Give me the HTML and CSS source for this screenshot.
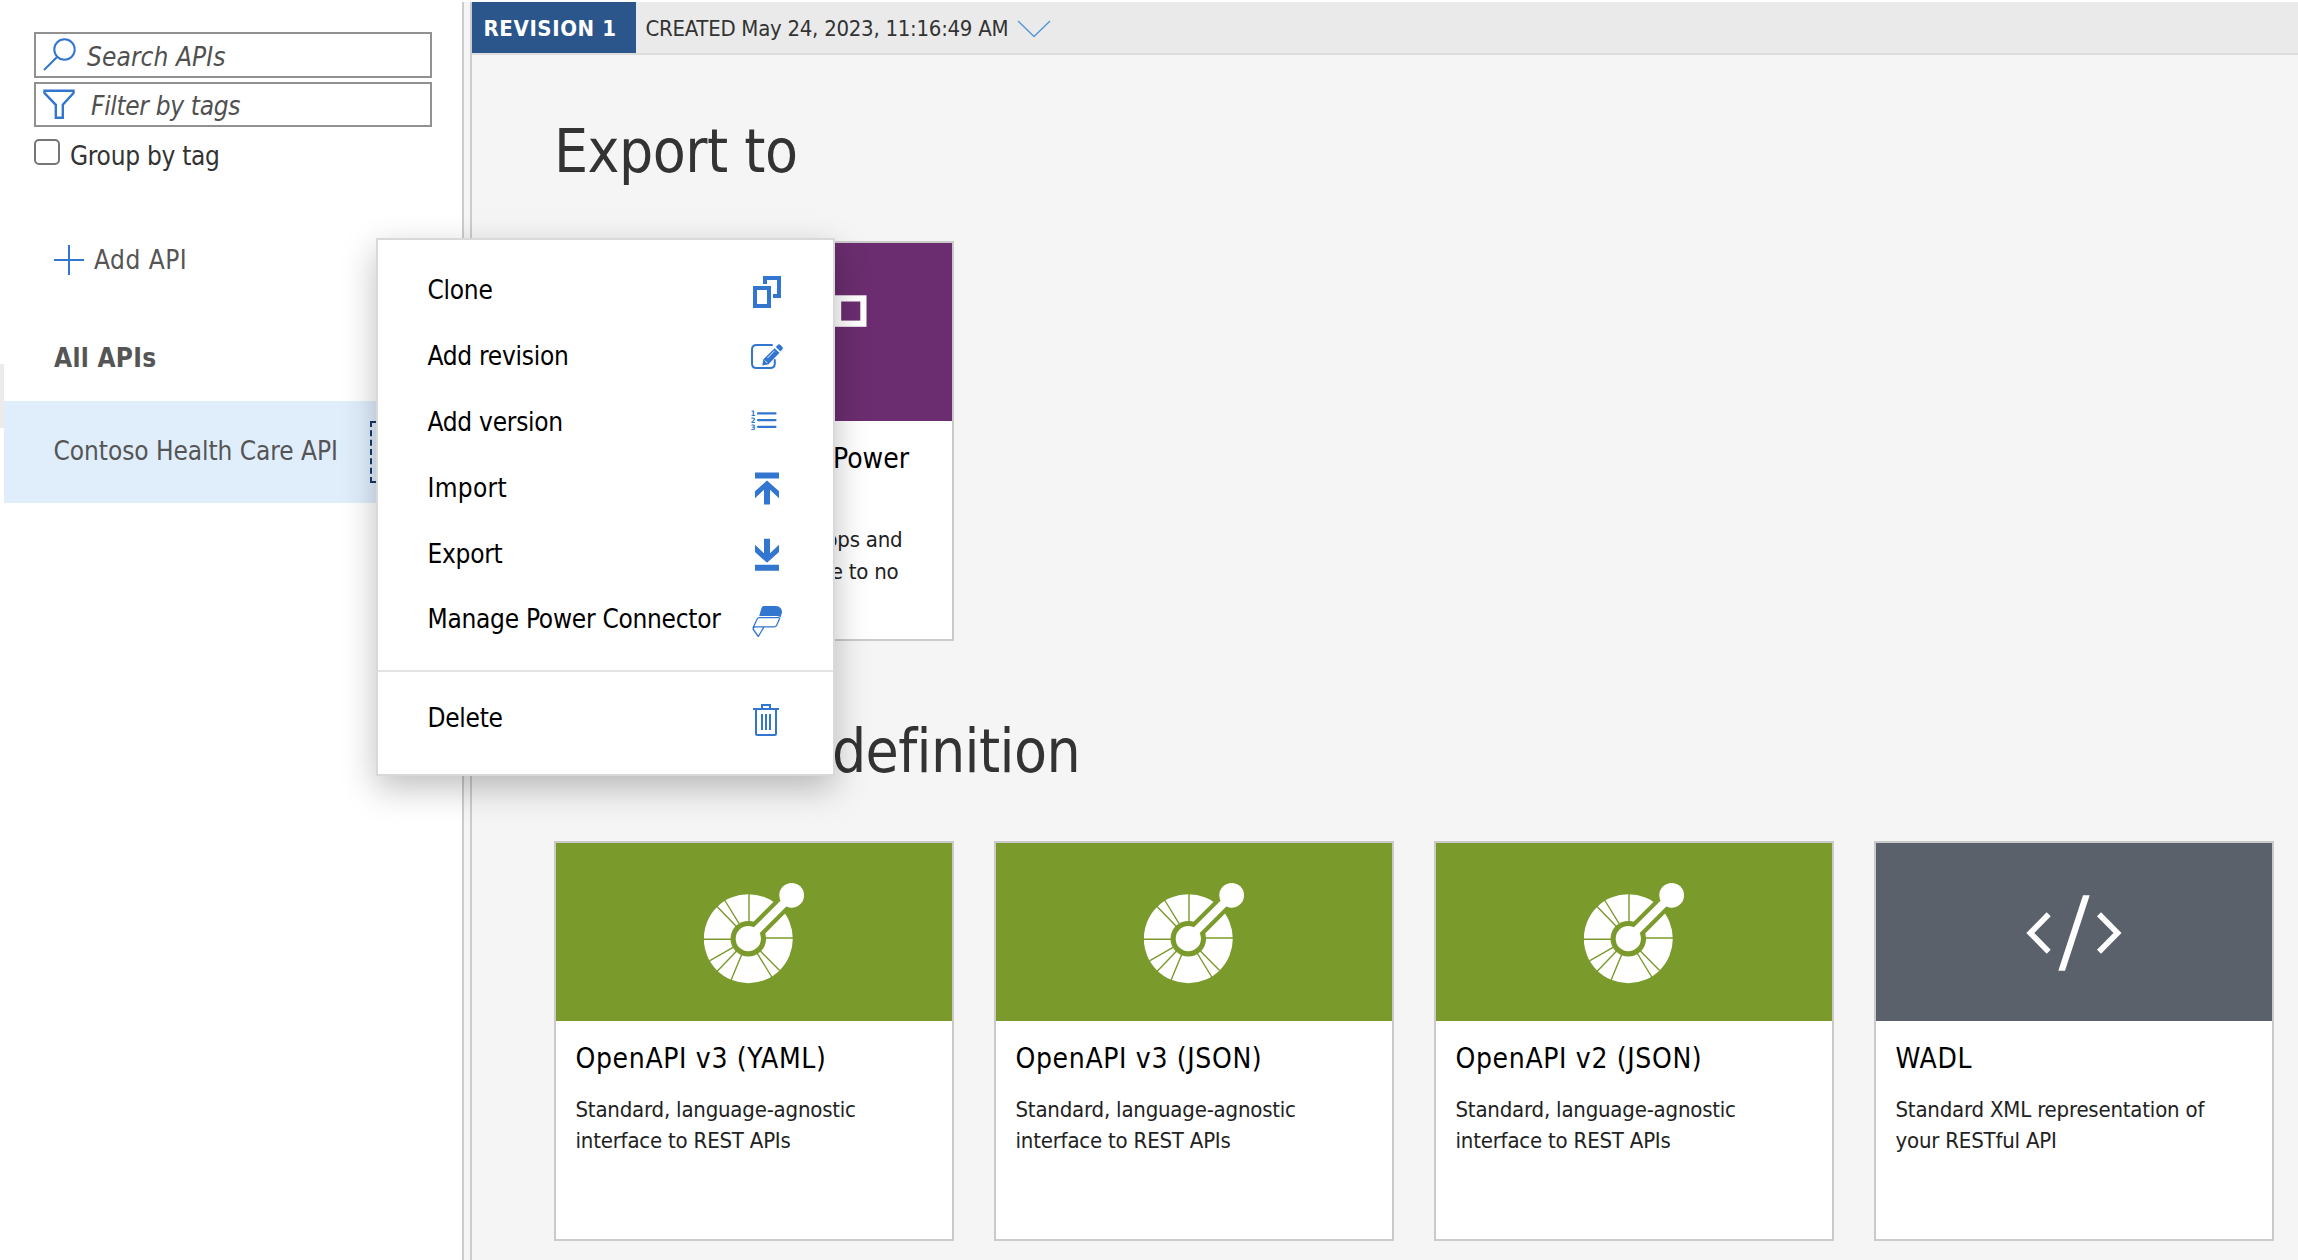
FILE: index.html
```html
<!DOCTYPE html>
<html lang="en">
<head>
<meta charset="utf-8">
<title>API export</title>
<link rel="stylesheet" href="styles.css">
</head>
<body>
<svg class="defs" width="0" height="0" aria-hidden="true">
  <symbol id="openapi" viewBox="0 0 100 104">
    <circle cx="44.3" cy="56.7" r="44.5" fill="#fff"/>
    <g stroke="#7a9a2b" stroke-width="1.4">
      <path d="M45 56.7V11M44.3 56.7L20.6 18M44.3 56.7L13 24.6M44.3 57.3H-1M44.3 56.7L5.5 78.8M44.3 56.7L13 89.4M44.3 56.7L26.9 98.5M44.3 56.7L67.8 95M44.3 56.7L75.6 88.6M44.3 56H90"/>
    </g>
    <circle cx="44.3" cy="56.7" r="17.8" fill="#7a9a2b"/>
    <path d="M44.3 56.7L83 18" stroke="#7a9a2b" stroke-width="16.5"/>
    <path d="M44.3 56.7L87.7 13.3" stroke="#fff" stroke-width="8.2"/>
    <circle cx="44.3" cy="56.7" r="12.6" fill="#fff"/>
    <circle cx="87.7" cy="13.3" r="12.4" fill="#fff"/>
  </symbol>
</svg>
<div class="page">
  <aside class="sidebar">
    <div class="field">
      <svg class="field-icon" viewBox="0 0 34 34"><circle cx="21.5" cy="12.5" r="10.2"/><path d="M14.300 19.700L1 33"/></svg>
      <span class="ph search">Search APIs</span>
    </div>
    <div class="field filter">
      <svg class="field-icon bold" viewBox="0 0 34 34"><path d="M1.500 2.800H30.500V5L19.800 16.800V29.700H12.800V16.800L1.500 5Z"/></svg>
      <span class="ph tags">Filter by tags</span>
    </div>
    <label class="check"><span class="box"></span><span>Group by tag</span></label>
    <div class="add">
      <svg class="plus" viewBox="0 0 30 30"><path d="M15 0V30M0 15H30"/></svg>
      <span>Add API</span>
    </div>
    <div class="all">All APIs</div>
    <div class="api-row">
      <span class="api-name">Contoso Health Care API</span>
      <span class="more"></span>
    </div>
  </aside>
  <div class="splitter"></div>
  <main class="main">
    <header class="bar">
      <span class="rev">REVISION 1</span>
      <span class="created">CREATED May 24, 2023, 11:16:49 AM</span>
      <svg class="chev" viewBox="0 0 34 18"><path d="M1 1L17 16.500L33 1"/></svg>
    </header>
    <h1 class="title">Export to</h1>
    <div class="cards">
      <section class="card tall">
        <div class="art purple">
          <svg width="228" height="100" viewBox="0 0 228 100"><g fill="none" stroke="#fff" stroke-width="6.200"><rect x="198.100" y="16.400" width="25.300" height="25.300"/><rect x="100" y="16.400" width="25.300" height="25.300"/></g></svg>
        </div>
        <h2 class="name">Power Apps and Power</h2>
        <p class="desc"><span class="l1">Build custom apps and</span><span class="l2">flows with little code to no</span></p>
      </section>
    </div>
    <h1 class="title def">API definition</h1>
    <div class="cards">
      <section class="card">
        <div class="art green"><svg class="logo"><use href="#openapi"/></svg></div>
        <h2 class="name">OpenAPI v3 (YAML)</h2>
        <p class="desc">Standard, language-agnostic<br>interface to REST APIs</p>
      </section>
      <section class="card">
        <div class="art green"><svg class="logo"><use href="#openapi"/></svg></div>
        <h2 class="name">OpenAPI v3 (JSON)</h2>
        <p class="desc">Standard, language-agnostic<br>interface to REST APIs</p>
      </section>
      <section class="card">
        <div class="art green"><svg class="logo"><use href="#openapi"/></svg></div>
        <h2 class="name">OpenAPI v2 (JSON)</h2>
        <p class="desc">Standard, language-agnostic<br>interface to REST APIs</p>
      </section>
      <section class="card">
        <div class="art slate"><svg class="code" viewBox="0 0 100 100"><path d="M24.700 32.300L6.300 51L24.700 69.700M75 32.300L93.500 51L75 69.700" fill="none" stroke="#fff" stroke-width="5.700"/><path d="M59 13.300H65.700L41 88.700H34.300Z" fill="#fff"/></svg></div>
        <h2 class="name">WADL</h2>
        <p class="desc">Standard XML representation of<br>your RESTful API</p>
      </section>
    </div>
  </main>
  <div class="menu">
    <div class="item"><span>Clone</span><svg viewBox="0 0 36 36"><path d="M5 16H19V34H5ZM15 12V6H29V24H23" fill="none" stroke="#3276d0" stroke-width="4"/></svg></div>
    <div class="item"><span>Add revision</span><svg viewBox="0 0 36 36"><path d="M22 7H6.500Q2 7 2 11.500V25.500Q2 30 6.500 30H20Q24.800 30 24.800 25.500V22" fill="none" stroke="#3276d0" stroke-width="2" stroke-linecap="round"/><path d="M24.600 10.200L29.500 14.800L18.600 26.200L12.300 27.400L13.200 21.400ZM25.800 8.900L28.200 6.600Q29.200 5.900 30.200 6.700L32.600 9.200Q33.300 10.200 32.500 11.200L30.500 13.500Z" fill="#3276d0"/><path d="M17.500 20L24.500 12.800M14.800 22.500L17.300 25" stroke="#fff" stroke-width=".9"/></svg></div>
    <div class="item"><span>Add version</span><svg viewBox="0 0 36 36"><path d="M8 10.400H25.500M8 17.100H25.500M8 23.800H25.500" stroke="#3276d0" stroke-width="2.200" stroke-linecap="round"/><g class="num"><text x="0.800" y="13.100">1</text><text x="0.800" y="19.900">2</text><text x="0.800" y="26.700">3</text></g></svg></div>
    <div class="item"><span class="wide">Import</span><svg viewBox="0 0 36 36"><path d="M5 3.600H29V9.600H5ZM17 11.400L29 22.300V29.300L20 20.800V35.600H14V20.800L5 29.300V22.300Z" fill="#3276d0"/></svg></div>
    <div class="item"><span>Export</span><svg viewBox="0 0 36 36"><path d="M5 29.800H29V35.800H5ZM17 27.800L29 17.100V9.800L20 18.300V3.800H14V18.300L5 9.800V17.100Z" fill="#3276d0"/></svg></div>
    <div class="item power"><span>Manage Power Connector</span><svg viewBox="0 0 36 36"><path d="M13.500 5H26Q32 5.500 32 11.500L30.500 16.500Q29.500 15 27 15H9.200L11.500 7Q12.200 5 13.500 5Z" fill="#3276d0"/><path d="M9 16.700H28.500Q30 16.700 29.500 18L26.500 24.500Q26 25.800 24 25.800H4.500L3 28L8.300 35.500L14 25.800M9 16.700Q8 16.700 7.200 18L2.900 27" fill="none" stroke="#3276d0" stroke-width="1.300" stroke-linejoin="round"/></svg></div>
    <div class="rule"></div>
    <div class="item"><span>Delete</span><svg viewBox="0 0 36 36"><path d="M3 9H29M12 8V5H20V8M6 10V33.500Q6 35 7.500 35H24.500Q26 35 26 33.500V10M12 14V30M16 14V30M20 14V30" fill="none" stroke="#3276d0" stroke-width="2"/></svg></div>
  </div>
</div>
</body>
</html>
```
FILE: styles.css
```css
* { box-sizing: border-box; }
body {
  margin: 0;
  background: #fff;
  font-family: "DejaVu Sans Condensed", "DejaVu Sans", "Noto Sans", sans-serif;
  font-stretch: condensed;
  font-size: 26px;
  color: #333;
}
svg { display: block; flex: none; }
.defs { position: absolute; }
.page {
  position: relative;
  display: flex;
  width: 2298px;
  height: 1260px;
  padding-top: 2px;
  overflow: hidden;
}

/* Sidebar */
.sidebar { width: 462px; flex: none; padding-top: 30px; white-space: nowrap; }
.field {
  display: flex;
  align-items: center;
  width: 398px;
  height: 46px;
  margin-left: 34px;
  padding-left: 7px;
  border: 2px solid #919191;
  font-style: italic;
  color: #505050;
}
.filter { height: 45px; margin-top: 4px; }
.field-icon { width: 34px; height: 34px; fill: none; stroke: #3276d0; stroke-width: 2; margin-top: -3px; }
.field-icon.bold { stroke-width: 2.4; margin-top: 0; }
.search { margin-left: 10px; padding-top: 3px; letter-spacing: .1px; }
.tags { margin-left: 14px; padding-top: 3px; letter-spacing: -.33px; }
.check {
  display: flex;
  height: 34px;
  margin: 12px 0 0 34px;
  line-height: 34px;
  letter-spacing: -.28px;
}
.box { width: 26px; height: 26px; margin-right: 10px; border: 2px solid #767676; border-radius: 5px; }
.add {
  display: flex;
  align-items: center;
  height: 36px;
  margin: 69px 0 0 54px;
  color: #555;
  letter-spacing: .5px;
}
.plus { width: 30px; height: 30px; margin-right: 10px; stroke: #3276d0; stroke-width: 2; }
.all { margin: 62px 0 0 54px; height: 36px; line-height: 36px; font-weight: bold; color: #555; letter-spacing: .3px; }
.api-row {
  display: flex;
  align-items: center;
  position: relative;
  height: 102px;
  margin: 25px 0 0 4px;
  padding-left: 49px;
  background: #e0eefc;
  color: #555;
}
.api-row::before {
  content: "";
  position: absolute;
  left: -4px;
  top: -37px;
  width: 4px;
  height: 64px;
  background: #edebe9;
}
.api-name { width: 317px; padding: 0 0 2px .5px; letter-spacing: -.06px; }
.more { width: 60px; height: 62px; border: 2px dashed #15396b; }

.splitter { width: 10px; flex: none; background: #f5f5f5; border: solid #ccc; border-width: 0 2px; }

/* Main pane */
.main { flex: 1; background: #f5f5f5; }
.bar { display: flex; height: 53px; background: #eaeaea; border-bottom: 2px solid #dcdcdc; font-size: 22px; line-height: 53px; white-space: nowrap; }
.rev { width: 164px; height: 51px; padding-left: 11.5px; background: #2b568c; color: #fff; font-weight: bold; letter-spacing: .6px; }
.created { width: 381px; padding-left: 9.5px; letter-spacing: -.27px; }
.chev { width: 34px; height: 18px; margin-top: 18px; fill: none; stroke: #5a93da; stroke-width: 1.4; }
.title { margin: 56px 0 0 82px; height: 80px; font-size: 60px; line-height: 80px; font-weight: normal; letter-spacing: -.5px; white-space: nowrap; }
.def { width: 526px; margin-top: 70px; letter-spacing: -.6px; text-align: right; }
.cards { display: flex; gap: 40px; margin: 50px 0 0 82px; }
.card { width: 400px; height: 400px; border: 2px solid #cacaca; background: #fff; white-space: nowrap; }
.art { display: flex; justify-content: center; align-items: center; height: 178px; }
.logo { width: 100px; height: 104px; margin-top: 4px; }
.code { width: 100px; height: 100px; }
.purple { background: #6b2d6f; }
.green { background: #7a9a2b; }
.slate { background: #5a616a; }
.name { margin: 22px 0 0 19.5px; height: 32px; font-size: 28px; line-height: 32px; font-weight: normal; color: #000; letter-spacing: .65px; }
.desc { margin: 19px 0 0 19.5px; font-size: 22px; line-height: 31.3px; color: #222; letter-spacing: -.2px; }
.tall .name { width: 333.500px; text-align: right; letter-spacing: 0; }
.tall .desc { margin-top: 49px; width: 327px; line-height: 32px; text-align: right; }
.tall .desc span { display: block; }
.l2 { width: 323px; }

/* Context menu */
.menu {
  position: absolute;
  left: 376px;
  top: 238px;
  width: 459px;
  height: 538px;
  padding-top: 17px;
  background: #fff;
  border: 2px solid #d9d9d9;
  box-shadow: 0 12px 32px rgba(0, 0, 0, .25);
  color: #000;
}
.item { display: flex; align-items: center; justify-content: space-between; height: 65.8px; padding: 0 47px 0 49.5px; letter-spacing: -.27px; white-space: nowrap; }
.item svg { width: 36px; height: 36px; }
.item span { flex: none; padding-top: 1px; }
.item .wide { letter-spacing: .3px; }
.num { font: bold 7.500px "DejaVu Sans Condensed", sans-serif; fill: #3276d0; }
.rule { height: 2px; margin: 18px 0 13px; background: #e4e4e4; }
```
